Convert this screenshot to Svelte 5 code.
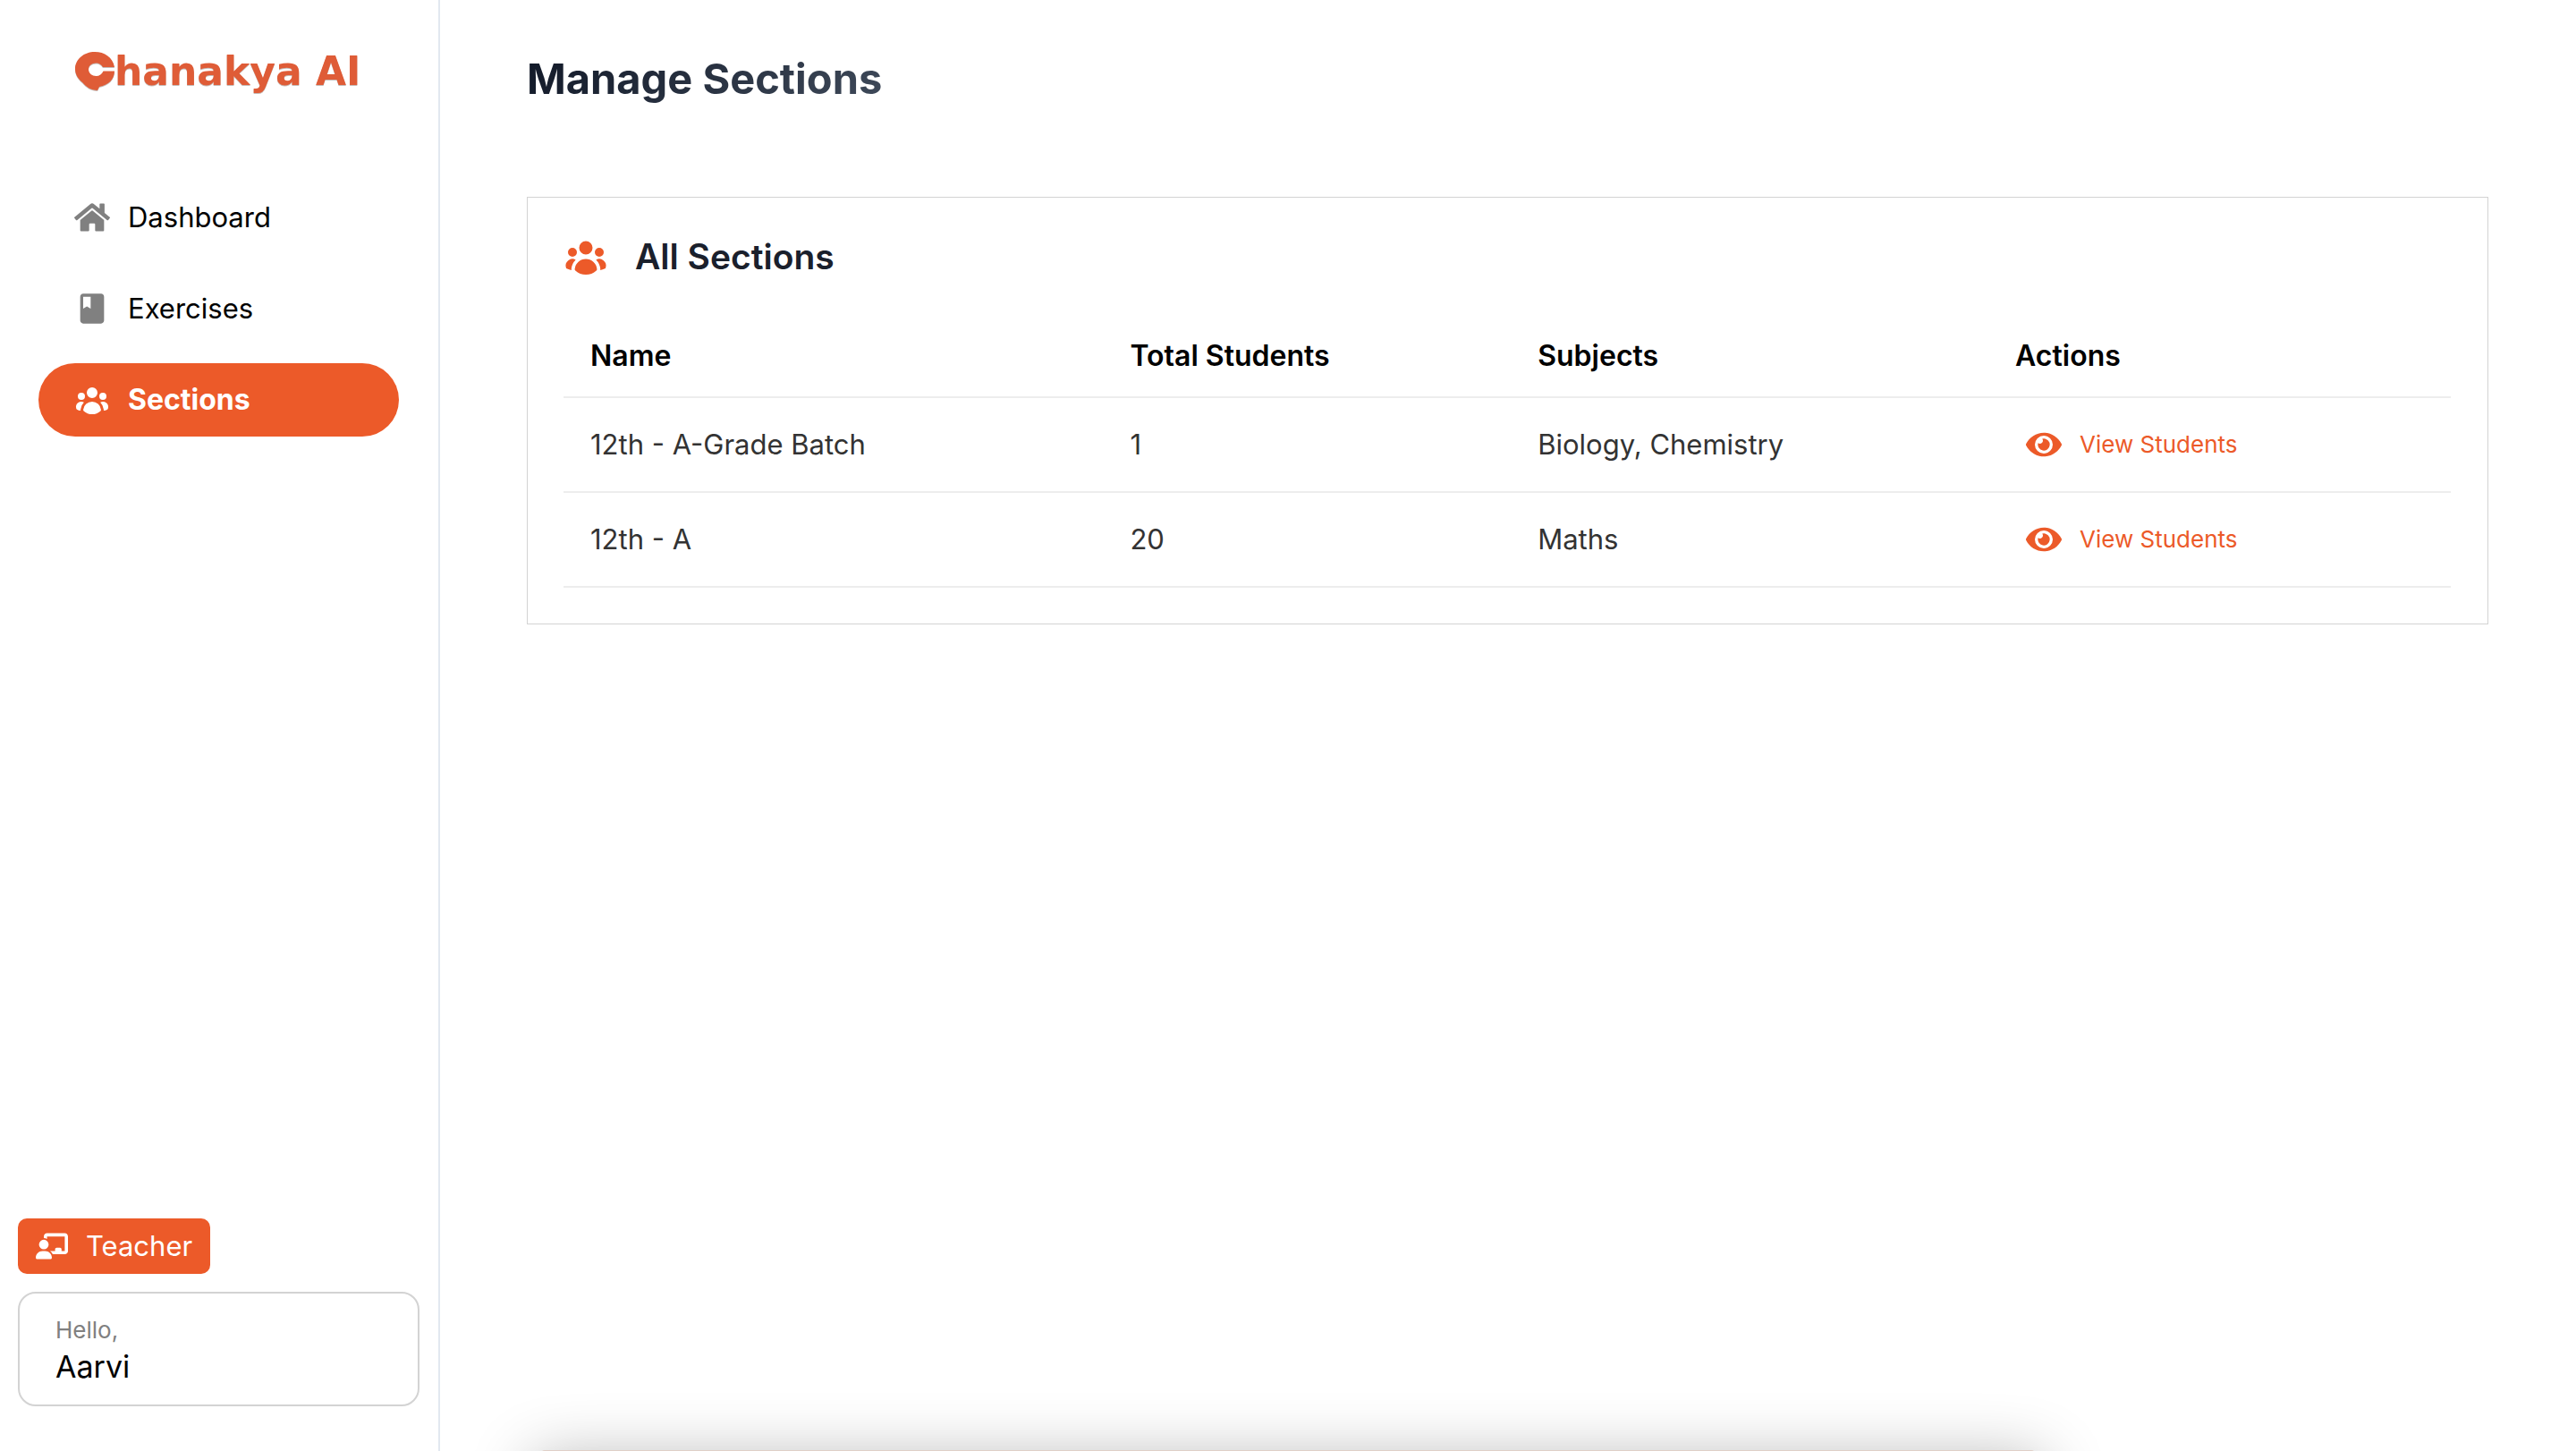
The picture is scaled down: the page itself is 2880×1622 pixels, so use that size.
<script>
  const nav = [
    { label: 'Dashboard', icon: 'home', active: false },
    { label: 'Exercises', icon: 'book', active: false },
    { label: 'Sections', icon: 'group', active: true }
  ];

  const sections = [
    { name: '12th - A-Grade Batch', total: 1, subjects: 'Biology, Chemistry' },
    { name: '12th - A', total: 20, subjects: 'Maths' }
  ];

  const icons = {
    home: {
      box: '0 0 576 512',
      d: 'M280.37 148.26L96 300.11V464a16 16 0 0 0 16 16l112.06-.29a16 16 0 0 0 15.92-16V368a16 16 0 0 1 16-16h64a16 16 0 0 1 16 16v95.64a16 16 0 0 0 16 16.05L464 480a16 16 0 0 0 16-16V300L295.67 148.26a12.19 12.19 0 0 0-15.3 0zM571.6 251.47L488 182.56V44.05a12 12 0 0 0-12-12h-56a12 12 0 0 0-12 12v72.61L318.47 43a48 48 0 0 0-61 0L4.34 251.47a12 12 0 0 0-1.6 16.9l25.5 31A12 12 0 0 0 45.15 301l235.22-193.74a12.19 12.19 0 0 1 15.3 0L530.9 301a12 12 0 0 0 16.9-1.6l25.5-31a12 12 0 0 0-1.7-16.93z'
    },
    book: {
      box: '0 0 24 24',
      d: 'M18 2H6c-1.1 0-2 .9-2 2v16c0 1.1.9 2 2 2h12c1.1 0 2-.9 2-2V4c0-1.1-.9-2-2-2zM6 4h5v8l-2.5-1.5L6 12V4z'
    },
    group: {
      box: '0 0 20 20',
      d: 'M10 9a3 3 0 1 0 0-6 3 3 0 0 0 0 6ZM6 8a2 2 0 1 1-4 0 2 2 0 0 1 4 0ZM1.49 15.326a.78.78 0 0 1-.358-.442 3 3 0 0 1 4.308-3.516 6.484 6.484 0 0 0-1.905 3.959c-.023.222-.014.442.025.654a4.97 4.97 0 0 1-2.07-.655ZM16.44 15.98a4.97 4.97 0 0 0 2.07-.654.78.78 0 0 0 .357-.442 3 3 0 0 0-4.308-3.517 6.484 6.484 0 0 1 1.907 3.96 2.32 2.32 0 0 1-.026.654ZM18 8a2 2 0 1 1-4 0 2 2 0 0 1 4 0ZM5.304 16.19a.844.844 0 0 1-.277-.71 5 5 0 0 1 9.947 0 .843.843 0 0 1-.277.71A6.975 6.975 0 0 1 10 18a6.974 6.974 0 0 1-4.696-1.81Z'
    },
    board: {
      box: '0 0 640 512',
      d: 'M160 64c0-35.3 28.7-64 64-64H576c35.3 0 64 28.7 64 64V352c0 35.3-28.7 64-64 64H336.8c-11.8-25.5-29.9-47.5-52.4-64H384V320c0-17.7 14.3-32 32-32h64c17.7 0 32 14.3 32 32v32h64V64L224 64v49.1C205.2 102.2 183.3 96 160 96V64zm0 64a96 96 0 1 1 0 192 96 96 0 1 1 0-192zM133.3 352h53.3C260.3 352 320 411.7 320 485.3c0 14.7-11.9 26.7-26.7 26.7H26.7C11.9 512 0 500.1 0 485.3C0 411.7 59.7 352 133.3 352z'
    },
    eye: {
      box: '0 0 576 512',
      d: 'M572.52 241.4C518.29 135.59 410.93 64 288 64S57.68 135.64 3.48 241.41a32.35 32.35 0 0 0 0 29.19C57.71 376.41 165.07 448 288 448s230.32-71.64 284.52-177.41a32.35 32.35 0 0 0 0-29.19zM288 400a144 144 0 1 1 144-144 143.93 143.93 0 0 1-144 144zm0-240a95.31 95.31 0 0 0-25.31 3.79 47.85 47.85 0 0 1-66.9 66.9A95.78 95.78 0 1 0 288 160z'
    }
  };
</script>

{#snippet icon(name, size)}
  <svg class="icon {size}" viewBox={icons[name].box} aria-hidden="true">
    <path d={icons[name].d} />
  </svg>
{/snippet}

<div class="app">
  <aside class="sidebar">
    <a class="logo" href="#home" aria-label="Chanakya AI">
      <svg class="mark" viewBox="0 0 44 44" aria-hidden="true">
        <path
          d="M22 0C33 0 42 6 44 17H31C29 14 27 12.500 23.500 12.500C18.500 12.500 15 15.500 15 19.500C15 24 19 27 23.500 27C27 27 30 25 31.500 21.500H44C44 30 38 37 27 39L25 43C18 43 12 39 8 34C3 30 0 25 0 19C0 8 10 0 22 0Z"
        />
      </svg>
      <span>hanakya AI</span>
    </a>

    <nav>
      {#each nav as item}
        <a href="#{item.label}" class:active={item.active} aria-current={item.active ? 'page' : undefined}>
          {@render icon(item.icon, 'medium')}
          <span>{item.label}</span>
        </a>
      {/each}
    </nav>

    <div class="account">
      <button class="role" type="button">
        {@render icon('board', 'small')}
        <span>Teacher</span>
      </button>
      <div class="user">
        <span class="hello">Hello,</span>
        <span class="name">Aarvi</span>
      </div>
    </div>
  </aside>

  <main>
    <h1>Manage Sections</h1>

    <section class="card">
      <h2>
        {@render icon('group', 'large')}
        <span>All Sections</span>
      </h2>
      <table>
        <thead>
          <tr>
            <th class="c-name">Name</th>
            <th class="c-total">Total Students</th>
            <th class="c-subjects">Subjects</th>
            <th>Actions</th>
          </tr>
        </thead>
        <tbody>
          {#each sections as row}
            <tr>
              <td>{row.name}</td>
              <td>{row.total}</td>
              <td>{row.subjects}</td>
              <td>
                <button class="view" type="button">
                  {@render icon('eye', 'medium')}
                  <span>View Students</span>
                </button>
              </td>
            </tr>
          {/each}
        </tbody>
      </table>
    </section>
  </main>

  <div class="sheet"></div>
</div>

<style>
  :global(body) {
    margin: 0;
    background: #fff;
    overflow: hidden;
  }

  .app {
    display: flex;
    min-height: 100vh;
    font-family: Inter, 'Open Sans', sans-serif;
    font-size: 31px;
    line-height: 42px;
    color: #000;
    background: #fff;
  }

  .icon {
    flex: none;
    fill: currentColor;
  }
  .small {
    width: 36px;
    height: 30px;
  }
  .medium {
    width: 40px;
    height: 40px;
  }
  .large {
    width: 50px;
    height: 50px;
    color: #ec5a29;
  }

  .sidebar {
    box-sizing: border-box;
    flex: none;
    width: 492px;
    display: flex;
    flex-direction: column;
    border-right: 2px solid #e2e8f0;
  }

  .logo {
    display: flex;
    align-items: center;
    height: 44px;
    margin: 58px 0 100px 84px;
    color: #df5c37;
    font-family: 'DejaVu Sans', sans-serif;
    font-size: 44px;
    font-weight: 700;
    line-height: 44px;
    text-decoration: none;
    white-space: nowrap;
    filter: drop-shadow(0 1px 0 #c4bcb9);
  }
  .mark {
    width: 44px;
    height: 44px;
    fill: currentColor;
  }

  nav {
    display: flex;
    flex-direction: column;
    gap: 20px;
    padding: 0 44px 0 43px;
  }
  nav a {
    display: flex;
    align-items: center;
    gap: 20px;
    height: 82px;
    padding: 0 40px;
    border-radius: 41px;
    color: #000;
    text-decoration: none;
  }
  nav a :global(.icon) {
    color: #808080;
  }
  nav a.active {
    background: #ec5a29;
    color: #fff;
    font-size: 32px;
    font-weight: 700;
  }
  nav a.active :global(.icon) {
    color: #fff;
  }

  .account {
    display: flex;
    flex-direction: column;
    align-items: flex-start;
    gap: 20px;
    margin-top: auto;
    padding: 0 21px 50px 20px;
  }
  .role {
    display: flex;
    align-items: center;
    gap: 20px;
    height: 62px;
    padding: 0 20px;
    border: 0;
    border-radius: 10px;
    background: #ec5a29;
    color: #fff;
    font: inherit;
  }
  .user {
    box-sizing: border-box;
    width: 100%;
    height: 128px;
    display: flex;
    flex-direction: column;
    justify-content: center;
    padding: 0 40px;
    border: 2px solid #d3d3d3;
    border-radius: 20px;
  }
  .hello {
    color: #808080;
    font-size: 26px;
    line-height: 40px;
  }
  .name {
    font-size: 34px;
    line-height: 42px;
  }

  main {
    flex: 1;
    min-width: 0;
    padding: 58px 98px 58px 97px;
  }

  h1 {
    width: fit-content;
    margin: 0 0 102px;
    background: linear-gradient(135deg, #111827, #3f4a5a);
    background-clip: text;
    -webkit-background-clip: text;
    color: transparent;
    font-size: 47px;
    font-weight: 700;
    line-height: 60px;
  }

  .card {
    padding: 41px 41px 40px 40px;
    border: 1px solid #d3d3d3;
  }
  h2 {
    display: flex;
    align-items: center;
    gap: 30px;
    margin: 0 0 40px;
    color: #1a202c;
    font-size: 39px;
    font-weight: 600;
    line-height: 50px;
  }

  table {
    width: 100%;
    border-collapse: collapse;
    table-layout: fixed;
  }
  th,
  td {
    box-sizing: border-box;
    padding: 0 30px;
    border-bottom: 2px solid #ededed;
    text-align: left;
  }
  th {
    height: 92px;
    font-size: 32px;
    font-weight: 600;
  }
  td {
    height: 106px;
    color: #333;
  }
  .c-name {
    width: 28.6%;
  }
  .c-total {
    width: 21.6%;
  }
  .c-subjects {
    width: 25.3%;
  }

  .view {
    display: flex;
    align-items: center;
    gap: 20px;
    padding: 0 12px;
    border: 0;
    background: none;
    color: #ec5a29;
    font: inherit;
    font-size: 26px;
  }

  /* Bottom sheet resting just below the fold, with only its top edge showing */
  .sheet {
    position: fixed;
    left: 21%;
    right: 21%;
    bottom: -119px;
    height: 120px;
    border-radius: 4px;
    background: #e0d0c8;
    box-shadow: 0 20px 70px 10px rgba(0, 0, 0, 0.3);
  }
</style>
